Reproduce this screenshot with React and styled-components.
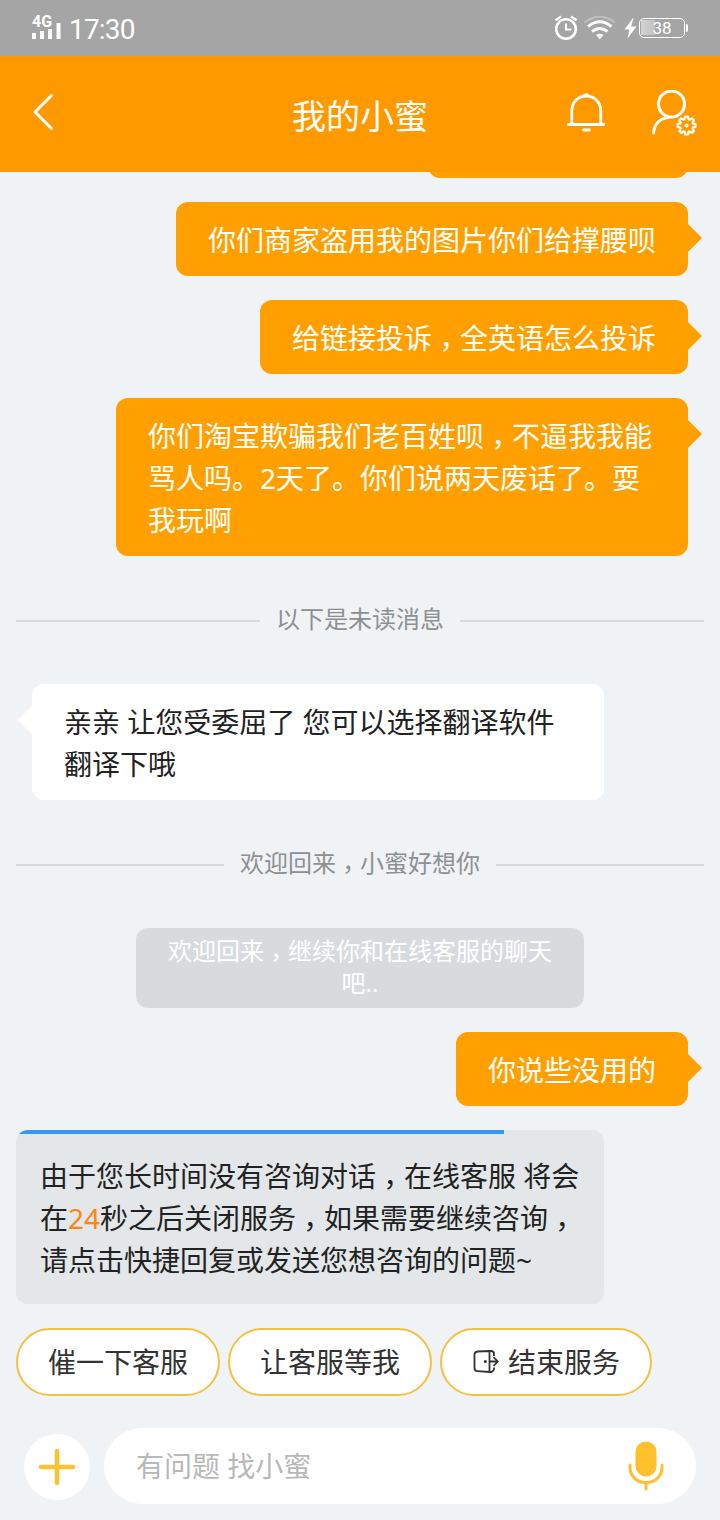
import { Fragment } from "react";
import styled, { createGlobalStyle } from "styled-components";

const GlobalStyle = createGlobalStyle`
  * {
    box-sizing: border-box;
  }

  body {
    margin: 0;
    background-color: #f0f3f6;
    font-family: "Noto Sans", "Noto Sans CJK SC", sans-serif;
  }
`;

const Page = styled.div`
  width: 720px;
  height: 1520px;
  display: flex;
  flex-direction: column;
  overflow: hidden;
  background-color: #f0f3f6;
`;

// Status bar
const StatusBar = styled.div`
  flex: none;
  height: 56px;
  padding: 0 32px;
  display: flex;
  align-items: center;
  justify-content: space-between;
  background-color: #a5a5a5;
  color: #fff;
  font-family: Roboto, sans-serif;
`;

const StatusGroup = styled.div`
  display: flex;
  align-items: center;
`;

const Signal = styled.div`
  width: 29px;
  height: 26px;
  margin-right: 8px;
  font-size: 16px;
  font-weight: 700;
  line-height: 14px;

  svg {
    display: block;
    margin-top: -6px;
  }
`;

const Time = styled.span`
  font-size: 28px;
  line-height: 32px;
  letter-spacing: -0.8px;
  padding-top: 4px;
`;

const Battery = styled.div`
  width: 46px;
  height: 20px;
  border: 1.5px solid #fff;
  border-radius: 5px;
  padding: 1px;
  font-size: 17px;
  line-height: 17px;
  text-align: center;
  background: linear-gradient(90deg, #d2d2d2, #c2c2c2) 1px 1px / 14px 15px no-repeat;
`;

const BatteryTip = styled.span`
  width: 2px;
  height: 8px;
  margin-left: 1px;
  border-radius: 0 2px 2px 0;
  background-color: #fff;
`;

// Header
const Header = styled.header`
  flex: none;
  height: 116px;
  padding: 4px 22px 0 32px;
  display: grid;
  grid-template-columns: 1fr auto 1fr;
  align-items: center;
  background-color: #ff9900;
  color: #fff;

  svg {
    display: block;
  }
`;

const BackButton = styled.div`
  padding-bottom: 8px;
`;

const Title = styled.h1`
  margin: 0 0 0 -10px;
  font-size: 34px;
  font-weight: 400;
  line-height: 48px;
`;

const HeaderActions = styled.div`
  display: flex;
  justify-content: flex-end;
  gap: 44px;
  padding-bottom: 6px;
`;

// Chat
const Chat = styled.main`
  flex: none;
  height: 1132px;
  padding: 0 16px;
  display: flex;
  flex-direction: column;
  justify-content: flex-end;
  gap: 24px;
  overflow: hidden;
`;

const Bubble = styled.div`
  position: relative;
  align-self: ${(props) => (props.$mine ? "flex-end" : "flex-start")};
  flex: none;
  width: ${(props) => props.$width || "auto"};
  min-height: 74px;
  margin: 0 16px;
  padding: 17px 32px 15px;
  border-radius: 12px;
  background-color: ${(props) => (props.$mine ? "#ffa000" : "#fff")};
  color: ${(props) => (props.$mine ? "#fff" : "#222")};
  font-size: 28px;
  line-height: 42px;
  white-space: nowrap;

  &:after {
    content: "";
    position: absolute;
    top: 22px;
    ${(props) => (props.$mine ? "right: -14px;" : "left: -14px;")}
    border: 14px solid transparent;
    border-${(props) => (props.$mine ? "left" : "right")}-color: ${(props) =>
      props.$mine ? "#ffa000" : "#fff"};
    border-${(props) => (props.$mine ? "right" : "left")}-width: 0;
  }
`;

const Divider = styled.div`
  flex: none;
  height: 80px;
  padding-bottom: 2px;
  display: flex;
  align-items: center;
  gap: 16px;
  color: #8c9093;
  font-size: 24px;
  line-height: 32px;

  &:before,
  &:after {
    content: "";
    flex: 1;
    height: 2px;
    margin-top: 4px;
    background-color: #d5dade;
  }
`;

const Notice = styled.div`
  flex: none;
  align-self: center;
  width: 448px;
  padding: 7px 32px 9px;
  border-radius: 12px;
  background-color: #d8dbdd;
  color: #fff;
  font-size: 24px;
  line-height: 32px;
  text-align: center;
  white-space: nowrap;
`;

const TimeoutCard = styled.div`
  flex: none;
  width: 588px;
  border-radius: 12px;
  overflow: hidden;
  background-color: #e3e7e9;
  color: #222;
  font-size: 28px;
  line-height: 42px;
  white-space: nowrap;
`;

const Progress = styled.div`
  width: 83%;
  height: 4px;
  background-color: #3698f5;
`;

const TimeoutText = styled.p`
  margin: 0;
  padding: 21px 24px 23px;
`;

const Seconds = styled.span`
  color: #ff8410;
`;

// Centred in its cell as in the TC face, but kept down on the baseline
const Comma = styled.span`
  font-family: "Noto Sans CJK TC", sans-serif;
  line-height: 0;
  vertical-align: -0.27em;
`;

// Quick replies
const QuickReplies = styled.div`
  flex: none;
  display: flex;
  gap: 8px;
  padding: 24px 16px 32px;
`;

const Reply = styled.button`
  height: 68px;
  display: flex;
  align-items: center;
  gap: 8px;
  padding: 0 30px;
  border: 2px solid #f5c040;
  border-radius: 34px;
  background-color: #fff;
  color: #333;
  font-family: inherit;
  font-size: 28px;
  line-height: 42px;
  white-space: nowrap;
`;

// Input bar
const InputBar = styled.div`
  flex: none;
  display: flex;
  align-items: center;
  gap: 14px;
  padding: 0 24px;
`;

const AddButton = styled.button`
  width: 66px;
  height: 66px;
  margin-top: 2px;
  padding: 0;
  display: flex;
  align-items: center;
  justify-content: center;
  border: 0;
  border-radius: 50%;
  background-color: #fff;
`;

const InputBox = styled.div`
  flex: 1;
  height: 76px;
  padding: 0 32px;
  display: flex;
  align-items: center;
  justify-content: space-between;
  border-radius: 38px;
  background-color: #fff;
  color: #b8b8b8;
  font-size: 28px;
  line-height: 42px;
`;

const BackIcon = () => (
  <svg width="22" height="38" viewBox="0 0 22 38" fill="none" stroke="#fff" strokeWidth="3">
    <path d="M19.500 2.500 3 19 19.500 35.500" strokeLinecap="round" strokeLinejoin="round" />
  </svg>
);

const BellIcon = () => (
  <svg width="40" height="46" viewBox="0 0 40 46" fill="none" stroke="#fff" strokeWidth="2.800">
    <path d="M5.800 34V21C5.800 12 12 6.200 20.200 6.200S34.800 12 34.800 21V34" />
    <path d="M2.500 34.500h35.200M17.500 40h6" strokeLinecap="round" />
    <path d="M17.500 5.500q2.700-2.500 5.400 0" strokeWidth="2" />
  </svg>
);

// Eight-toothed cog drawn as one closed outline
const gearPath = (cx, cy, outer, inner) => {
  const points = [];
  for (let i = 0; i < 8; i++) {
    [
      [-18, inner],
      [-9, outer],
      [9, outer],
      [18, inner],
    ].forEach(([offset, r]) => {
      const a = ((i * 45 + offset) * Math.PI) / 180;
      points.push(`${(cx + r * Math.sin(a)).toFixed(2)} ${(cy - r * Math.cos(a)).toFixed(2)}`);
    });
  }
  return `M${points.join("L")}Z`;
};

const ProfileIcon = () => (
  <svg width="48" height="46" viewBox="0 0 48 46" fill="none" stroke="#fff" strokeWidth="3">
    <circle cx="21.500" cy="14" r="13" />
    <path d="M3.500 43C4.500 34 10 28 18.500 27.500" strokeLinecap="round" />
    <path d={gearPath(36.6, 35.6, 9, 6.6)} strokeWidth="2.200" strokeLinejoin="round" />
    <circle cx="36.600" cy="35.600" r="2" fill="#fff" stroke="none" />
  </svg>
);

const StatusIcons = () => (
  <svg width="84" height="26" viewBox="0 0 84 26" fill="none" stroke="#fff">
    <circle cx="11" cy="14" r="9.800" strokeWidth="2.600" />
    <path d="M11 8.500V14.500H16.500" strokeWidth="2" />
    <path d="M0.500 5.300 6 1.600M16 1.600l5.500 3.700" strokeWidth="2.400" />
    <path d="M29.500 7.500q15.300-11.500 30.600 0" strokeWidth="2" opacity="0.300" />
    <path d="M33 11.500q11.700-9.500 23.500 0" strokeWidth="3" />
    <path d="M37 16.500q7.700-6 15.500 0" strokeWidth="3" />
    <path d="M41 20q3.800-2.500 7.600 0L44.800 24.300Z" fill="#fff" stroke="none" />
    <path d="M78 3 69.500 14.500h5L72.500 23.500 81.500 11.500h-5.300L78.500 3Z" fill="#fff" stroke="none" />
  </svg>
);

const ExitIcon = () => (
  <svg width="28" height="28" viewBox="0 0 28 28" fill="none" stroke="#333" strokeWidth="1.800">
    <path
      d="M17.500 3 5.500 3.500Q2.500 3.800 2.500 6.500V20Q2.500 23 5.500 23.200L17.500 24Z"
      strokeLinejoin="round"
    />
    <path d="M17.500 3H19.500Q22 3.300 22 6v2M17.500 24h1.500Q21.800 23.500 22.200 19.500" />
    <path d="M17 13.500h8.500M21.500 9l4.300 4.500-4.300 4.500" />
    <circle cx="13.300" cy="13.500" r="1.500" fill="#333" stroke="none" />
  </svg>
);

const MicIcon = () => (
  <svg width="36" height="50" viewBox="0 0 36 50" fill="none" stroke="#ffc02e">
    <rect x="7.500" y="0.500" width="21" height="35" rx="10.500" fill="#ffc02e" stroke="none" />
    <path d="M2 24v2c0 9.500 7 15.500 16 15.500S34 35.500 34 26v-2" strokeWidth="3" strokeLinecap="round" />
    <path d="M18 42v6" strokeWidth="3" strokeLinecap="round" />
  </svg>
);

const Text = ({ children }) =>
  children.split("，").map((part, i) => (
    <Fragment key={i}>
      {i > 0 && <Comma>，</Comma>}
      {part}
    </Fragment>
  ));

const App = () => {
  return (
    <Page>
      <GlobalStyle />
      <StatusBar>
        <StatusGroup>
          <Signal>
            4G
            <svg width="29" height="16" viewBox="0 0 29 16" fill="#fff">
              <path d="M0 10h4v6H0zM8 8h4v8H8zM16 6h4v10h-4zM24.500 0h4v16h-4z" />
            </svg>
          </Signal>
          <Time>17:30</Time>
        </StatusGroup>
        <StatusGroup>
          <StatusIcons />
          <Battery>38</Battery>
          <BatteryTip />
        </StatusGroup>
      </StatusBar>

      <Header>
        <BackButton>
          <BackIcon />
        </BackButton>
        <Title>我的小蜜</Title>
        <HeaderActions>
          <BellIcon />
          <ProfileIcon />
        </HeaderActions>
      </Header>

      <Chat>
        {/* scrolled away, only its lower edge shows */}
        <Bubble $mine $width="260px" />
        <Bubble $mine>你们商家盗用我的图片你们给撑腰呗</Bubble>
        <Bubble $mine>
          <Text>给链接投诉，全英语怎么投诉</Text>
        </Bubble>
        <Bubble $mine $width="572px">
          <Text>你们淘宝欺骗我们老百姓呗，不逼我我能</Text>
          <br />
          骂人吗。2天了。你们说两天废话了。耍
          <br />
          我玩啊
        </Bubble>

        <Divider>以下是未读消息</Divider>

        <Bubble $width="572px">
          亲亲 让您受委屈了 您可以选择翻译软件
          <br />
          翻译下哦
        </Bubble>

        <Divider>
          <span>
            <Text>欢迎回来，小蜜好想你</Text>
          </span>
        </Divider>

        <Notice>
          <Text>欢迎回来，继续你和在线客服的聊天</Text>
          <br />
          吧..
        </Notice>

        <Bubble $mine>你说些没用的</Bubble>

        <TimeoutCard>
          <Progress />
          <TimeoutText>
            <Text>由于您长时间没有咨询对话，在线客服 将会</Text>
            <br />
            在<Seconds>24</Seconds>
            <Text>秒之后关闭服务，如果需要继续咨询，</Text>
            <br />
            请点击快捷回复或发送您想咨询的问题~
          </TimeoutText>
        </TimeoutCard>
      </Chat>

      <QuickReplies>
        <Reply>催一下客服</Reply>
        <Reply>让客服等我</Reply>
        <Reply>
          <ExitIcon />
          结束服务
        </Reply>
      </QuickReplies>

      <InputBar>
        <AddButton>
          <svg width="38" height="38" viewBox="0 0 38 38" stroke="#fcc232" strokeWidth="4.500">
            <path d="M19 3v32M3 19h32" strokeLinecap="round" />
          </svg>
        </AddButton>
        <InputBox>
          有问题 找小蜜
          <MicIcon />
        </InputBox>
      </InputBar>
    </Page>
  );
};

export default App;
